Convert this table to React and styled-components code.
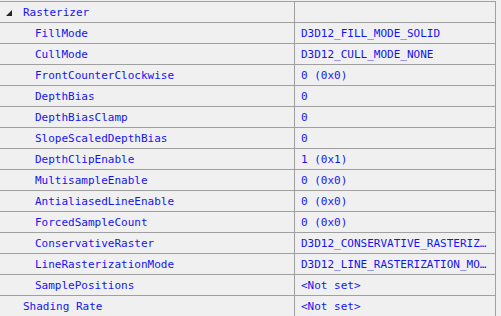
import React from "react";
import styled, { createGlobalStyle } from "styled-components";

const Global = createGlobalStyle`
  html, body { margin: 0; padding: 0; background: #f0f0f0; }
  body { font-family: "DejaVu Sans Mono", "Liberation Mono", monospace; font-size: 11px; overflow: hidden; }
`;

const Grid = styled.div`
  width: 495px;
  margin-top: 1px;
  border-right: 1px solid #a0a0a0;
  display: flex;
  flex-direction: column;
`;

const Row = styled.div`
  display: grid;
  grid-template-columns: 295px 1fr;
  height: 20px;
  border-top: 1px solid #a0a0a0;
`;

const NameCell = styled.div`
  display: flex;
  align-items: center;
  border-right: 1px solid #a0a0a0;
  padding-left: ${(p) => p.$indent}px;
  color: #1414f0;
  white-space: nowrap;
  overflow: hidden;
  position: relative;
`;

const ValueCell = styled.div`
  display: flex;
  align-items: center;
  padding: 0 2px 0 6px;
  color: #1414f0;
  min-width: 0;
`;

const ValueText = styled.span`
  white-space: nowrap;
`;

const Arrow = styled.svg`
  position: absolute;
  left: 6px;
  top: 8px;
`;

const children = [
  ["FillMode", "D3D12_FILL_MODE_SOLID"],
  ["CullMode", "D3D12_CULL_MODE_NONE"],
  ["FrontCounterClockwise", "0 (0x0)"],
  ["DepthBias", "0"],
  ["DepthBiasClamp", "0"],
  ["SlopeScaledDepthBias", "0"],
  ["DepthClipEnable", "1 (0x1)"],
  ["MultisampleEnable", "0 (0x0)"],
  ["AntialiasedLineEnable", "0 (0x0)"],
  ["ForcedSampleCount", "0 (0x0)"],
  ["ConservativeRaster", "D3D12_CONSERVATIVE_RASTERIZ…"],
  ["LineRasterizationMode", "D3D12_LINE_RASTERIZATION_MO…"],
  ["SamplePositions", "<Not set>"],
];

export default function App() {
  return (
    <>
      <Global />
      <Grid>
        <Row>
          <NameCell $indent={23}>
            <Arrow width="7" height="7" viewBox="0 0 7 7">
              <path d="M6 0 L6 6 L0 6 Z" fill="#262626" />
            </Arrow>
            Rasterizer
          </NameCell>
          <ValueCell />
        </Row>
        {children.map(([n, v]) => (
          <Row key={n}>
            <NameCell $indent={35}>{n}</NameCell>
            <ValueCell>
              <ValueText>{v}</ValueText>
            </ValueCell>
          </Row>
        ))}
        <Row>
          <NameCell $indent={23}>Shading Rate</NameCell>
          <ValueCell>
            <ValueText>{"<Not set>"}</ValueText>
          </ValueCell>
        </Row>
      </Grid>
    </>
  );
}
